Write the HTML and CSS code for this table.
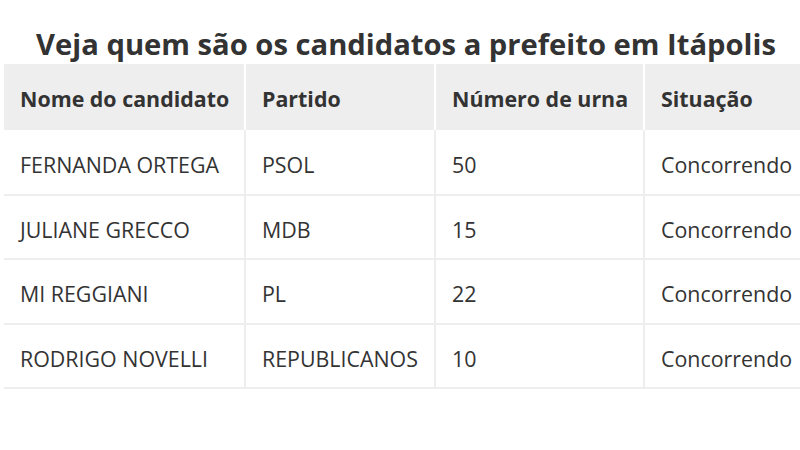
FILE: index.html
```html
<!DOCTYPE html>
<html lang="pt-BR">
<head>
<meta charset="utf-8">
<link rel="stylesheet" href="styles.css">
</head>
<body>
<div class="page">
  <h1 class="title">Veja quem são os candidatos a prefeito em Itápolis</h1>
  <div class="wrap">
    <table class="tbl">
      <colgroup>
        <col class="c1"><col class="c2"><col class="c3"><col class="c4">
      </colgroup>
      <thead>
        <tr><th>Nome do candidato</th><th>Partido</th><th>Número de urna</th><th>Situação</th></tr>
      </thead>
      <tbody>
        <tr><td>FERNANDA ORTEGA</td><td>PSOL</td><td>50</td><td>Concorrendo</td></tr>
        <tr><td>JULIANE GRECCO</td><td>MDB</td><td>15</td><td>Concorrendo</td></tr>
        <tr><td>MI REGGIANI</td><td>PL</td><td>22</td><td>Concorrendo</td></tr>
        <tr><td>RODRIGO NOVELLI</td><td>REPUBLICANOS</td><td>10</td><td>Concorrendo</td></tr>
      </tbody>
    </table>
  </div>
</div>
</body>
</html>
```
FILE: styles.css
```css
html, body {
  margin: 0;
  padding: 0;
  background: #fff;
}
.page {
  width: 800px;
  height: 450px;
  overflow: hidden;
  font-family: "Open Sans", "Liberation Sans", sans-serif;
  color: #333;
}
.title {
  margin: 0;
  padding: 24px 0 0 12px;
  height: 40px;
  text-align: center;
  font-size: 29.2px;
  font-weight: 700;
  line-height: 40px;
  letter-spacing: 0;
  color: #333;
}
.wrap {
  padding-left: 4px;
  overflow: hidden;
}
.tbl {
  border-collapse: collapse;
  table-layout: fixed;
  width: 860px;
}
.c1 { width: 241px; }
.c2 { width: 190px; }
.c3 { width: 209px; }
.c4 { width: 220px; }
.tbl th {
  background: #eeeeee;
  height: 66px;
  padding: 3px 0 0 16px;
  text-align: left;
  font-size: 21.4px;
  font-weight: 700;
  border-left: 2px solid #fff;
  box-sizing: border-box;
}
.tbl th:first-child { border-left: none; }
.tbl td {
  height: 64.5px;
  padding: 5px 0 0 16px;
  font-size: 21.4px;
  font-weight: 400;
  border-bottom: 2px solid #eeeeee;
  border-left: 2px solid #eeeeee;
  box-sizing: border-box;
}
.tbl td:first-child { border-left: none; }
```
